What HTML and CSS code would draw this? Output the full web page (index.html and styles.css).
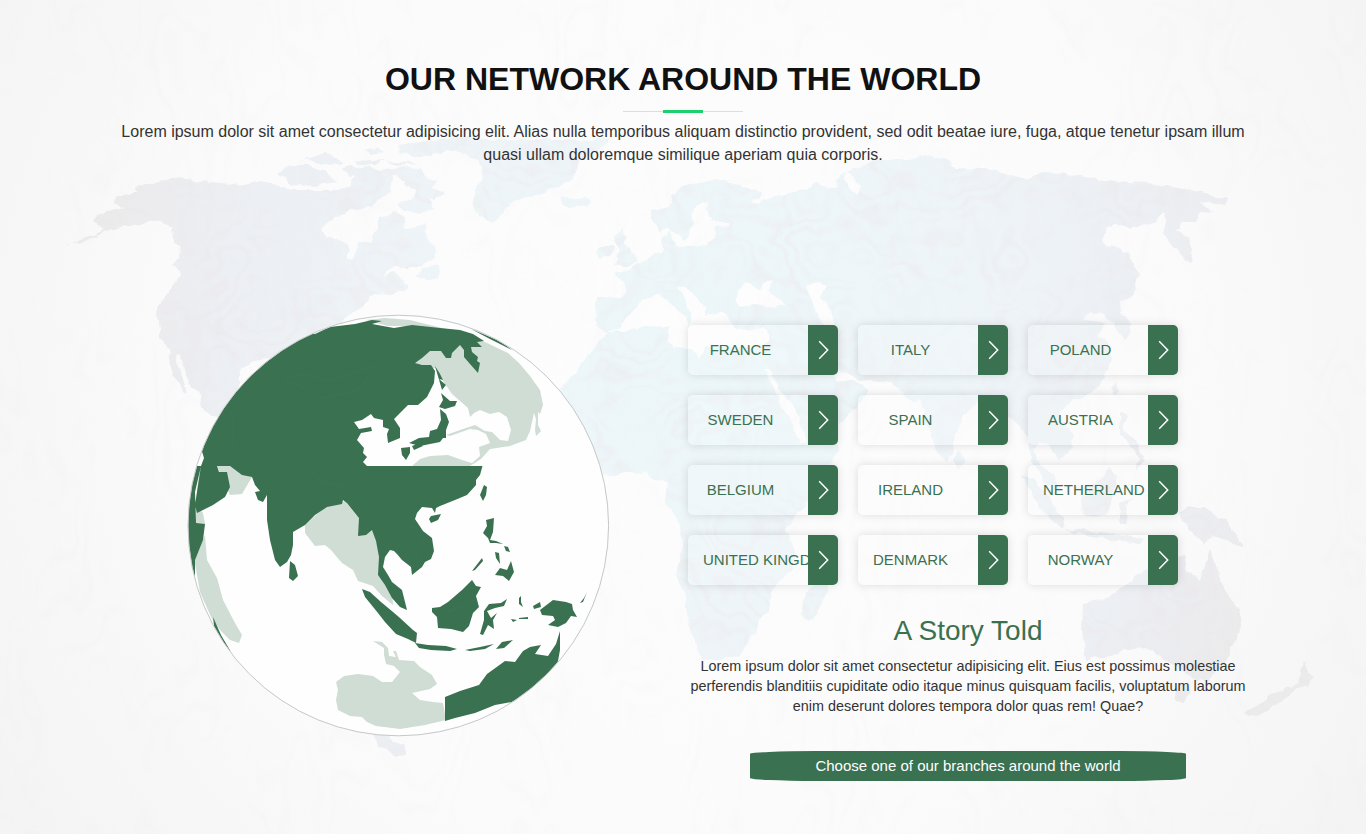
FILE: index.html
```html
<!DOCTYPE html>
<html lang="en">
<head>
<meta charset="utf-8">
<title>Our Network Around The World</title>
<link rel="stylesheet" href="styles.css">
</head>
<body>
<section class="network">
  <svg class="backdrop" viewBox="0 0 1366 834" aria-hidden="true">
    <defs>
      <symbol id="chevron" viewBox="0 0 30 50"><path d="M11.200 16.300 19.700 25 11.200 33.700" fill="none" stroke="#fff" stroke-width="1.500"/></symbol>
      <radialGradient id="paper" gradientUnits="userSpaceOnUse" cx="683" cy="370" r="800">
        <stop offset="0" stop-color="#fdfdfd"/><stop offset=".6" stop-color="#fbfbfb"/><stop offset="1" stop-color="#f4f4f4"/>
      </radialGradient>
      <radialGradient id="landfill" gradientUnits="userSpaceOnUse" cx="700" cy="360" r="610">
        <stop offset="0" stop-color="#ecf7f9"/><stop offset=".45" stop-color="#eef5f8"/><stop offset=".78" stop-color="#eceff3"/><stop offset=".93" stop-color="#ececef"/><stop offset="1" stop-color="#ebebeb"/>
      </radialGradient>
      <filter id="coast" x="0" y="0" width="100%" height="100%">
        <feTurbulence type="fractalNoise" baseFrequency=".09" numOctaves="2" seed="4"/>
        <feDisplacementMap in="SourceGraphic" scale="7" xChannelSelector="R" yChannelSelector="G"/>
      </filter>
      <filter id="crease" x="0" y="0" width="100%" height="100%">
        <feTurbulence type="fractalNoise" baseFrequency=".012 .014" numOctaves="3" seed="8" result="noise"/>
        <feColorMatrix in="noise" values="0 0 0 0 .84  0 0 0 0 .76  0 0 0 0 .8  1 0 0 0 0"/>
        <feComponentTransfer result="lines"><feFuncA type="table" tableValues="0 0 0 0 0 0 0 .25 0 0 .28 0 0 .28 0 0 .25 0 0 0 0 0 0"/></feComponentTransfer>
        <feColorMatrix in="noise" values="0 0 0 0 0  0 0 0 0 0  0 0 0 0 0  0 4 0 0 -1.4"/>
        <feComposite in="lines" operator="in"/>
        <feComposite in2="SourceAlpha" operator="in"/>
      </filter>
      <filter id="grain" x="0" y="0" width="100%" height="100%">
        <feTurbulence type="fractalNoise" baseFrequency=".012 .006" numOctaves="3" seed="21" result="noise"/>
        <feColorMatrix in="noise" values="0 0 0 0 .7  0 0 0 0 .7  0 0 0 0 .7  1 0 0 0 0"/>
        <feComponentTransfer result="lines"><feFuncA type="table" tableValues="0 0 0 0 0 0 0 .05 0 0 .06 0 0 .06 0 0 .05 0 0 0 0 0 0"/></feComponentTransfer>
        <feColorMatrix in="noise" values="0 0 0 0 0  0 0 0 0 0  0 0 0 0 0  0 5 0 0 -2"/>
        <feComposite in="lines" operator="in"/>
      </filter>
      <g id="land">
        <path d="M60 247 75 243 105 230 97 226 93 222 98 215 104 212 125 207 114 203 117 198 137 193 136 188 155 182 180 177 200 182 222 184 240 186 262 181 275 184 290 190 338 190 350 186 355 175 352 169 367 166 380 171 400 167 420 168 429 179 436 180 432 188 446 194 435 200 428 198 435 208 425 212 415 213 400 208 398 202 412 200 415 192 405 183 395 174 390 182 392 192 380 198 372 206 352 210 335 216 322 229 325 236 345 242 350 250 347 258 353 260 358 244 372 240 380 218 395 212 404 218 405 229 413 228 424 223 425 238 434 246 436 258 420 267 395 267 383 276 396 273 405 282 410 285 392 296 384 292 370 295 365 305 345 318 335 330 300 350 255 361 241 370 238 386 230 420 215 417 202 408 200 396 190 385 184 370 181 354 176 355 178 367 183 380 186 389 184 393 177 382 171 368 169 349 160 338 157 312 163 300 175 285 180 273 174 264 179 258 180 246 174 244 173 227 153 220 140 225 125 227 105 232 85 242Z"/>
        <path d="M277 174 290 165 308 165 327 172 335 183 318 186 292 185 284 177ZM305 159 325 153 345 162 330 166ZM341 169 350 166 366 171 352 176ZM355 160 372 161 385 160 375 165 357 165ZM365 151 378 148 382 153 372 155ZM387 161 410 163 418 163 400 166ZM397 145 450 138 480 134 458 150 420 157 400 154ZM414 276 423 268 438 264 439 279 430 281ZM560 198 567 197 574 199 586 198 592 200 587 205 574 208 564 204ZM597 251 605 245 613 245 611 255 599 260ZM613 235 620 231 625 226 623 235 627 239 623 244 630 249 636 256 638 261 629 266 613 266 620 260 616 256 620 250 615 244Z"/>
        <path d="M450 148 470 140 540 139 610 140 593 153 580 160 573 180 543 193 513 200 502 214 493 222 478 218 473 203 475 189 483 178 480 160Z"/>
        <path d="M597 296 622 297 626 290 624 282 614 275 625 271 640 262 655 253 663 250 662 236 672 231 677 247 690 247 705 245 716 237 715 228 728 224 728 222 712 222 708 215 705 207 708 200 716 199 708 200 701 204 692 215 694 223 688 236 684 240 678 234 670 228 660 231 652 222 652 210 668 206 672 197 680 188 700 182 715 179 730 182 763 193 762 198 750 200 758 203 775 196 790 193 810 188 815 183 830 188 838 187 836 180 842 172 855 168 880 160 913 160 918 155 950 160 952 168 985 169 1005 173 1025 179 1042 173 1070 174 1105 181 1148 183 1190 190 1227 199 1225 205 1200 201 1213 213 1200 212 1195 222 1180 222 1176 230 1190 237 1192 250 1190 262 1175 248 1163 235 1166 220 1162 213 1155 223 1138 227 1115 226 1106 230 1102 243 1115 248 1130 255 1138 273 1135 293 1120 302 1121 313 1132 325 1131 335 1123 340 1113 323 1103 315 1091 311 1082 320 1095 321 1105 323 1098 335 1110 345 1111 360 1105 378 1090 393 1075 400 1068 407 1058 410 1065 425 1074 435 1072 448 1060 460 1050 447 1039 440 1034 450 1040 465 1054 475 1060 490 1045 483 1031 460 1029 435 1015 425 1005 410 990 395 978 402 962 417 955 435 953 455 945 462 935 445 925 420 921 400 912 403 905 395 892 383 860 380 840 370 829 362 838 382 858 382 868 390 858 405 845 420 810 443 836 442 838 450 824 480 805 505 786 528 793 550 793 570 770 590 770 612 758 620 755 635 740 655 722 660 702 661 697 645 688 620 684 590 676 575 682 545 680 525 665 500 667 483 650 480 644 472 627 471 612 476 600 475 575 455 560 440 560 390 568 380 592 350 606 332 597 325 595 315Z"/>
        <path d="M830 572 825 595 815 618 808 621 802 612 808 590ZM1115 382 1118 391 1114 397 1111 389ZM958 448 966 460 958 472 954 460ZM1119 412 1127 415 1124 430 1135 440 1145 460 1134 472 1140 458 1131 446 1120 436ZM1020 475 1032 478 1050 500 1064 520 1062 528 1045 515ZM1080 500 1110 467 1118 476 1108 515 1085 516ZM1120 505 1135 497 1126 507 1134 525 1128 512 1125 525 1120 525ZM1064 528 1100 532 1145 539 1140 544 1085 536ZM1178 511 1190 507 1204 507 1224 519 1234 531 1244 548 1226 541 1214 534 1204 543 1190 530ZM1083 603 1107 598 1122 587 1145 570 1172 556 1186 557 1184 570 1200 580 1210 550 1219 576 1230 597 1238 610 1241 622 1235 640 1222 668 1206 681 1188 675 1180 668 1162 659 1147 647 1134 648 1115 655 1086 660 1082 630ZM1178 684 1188 686 1190 694 1183 703 1175 702ZM1304 661 1308 673 1315 676 1306 688 1297 687 1285 697 1270 710 1250 718 1244 714 1266 700 1285 688 1298 683ZM360 720 402 745 406 754 397 757 378 745Z"/>
      </g>
    </defs>
    <rect width="1366" height="834" fill="url(#paper)"/>
    <g filter="url(#coast)">
      <use href="#land" fill="url(#landfill)"/>
      <use href="#land" filter="url(#crease)"/>
      <g fill="#fdfdfd">
        <path d="M605 332 619 330 626 318 634 310 642 300 660 293 670 304 682 314 690 325 690 312 677 287 684 287 705 306 703 316 720 312 730 318 735 330 768 329 768 342 755 348 738 346 708 347 700 357 690 350 672 347 667 338 671 327 645 326 625 332Z"/>
        <path d="M738 292 746 282 753 286 760 290 763 283 772 281 768 290 787 305 775 308 755 304 738 306ZM806 286 820 281 825 285 820 298 830 308 835 325 823 324 815 312 812 300ZM763 370 768 370 780 390 793 405 807 442 800 443 785 410Z"/>
        <path d="M848 170 854 178 861 186 858 196 848 185 843 179Z"/>
      </g>
    </g>
    <rect width="1366" height="834" filter="url(#grain)"/>
  </svg>

  <header class="intro">
    <h1 class="intro-title">OUR NETWORK AROUND THE WORLD</h1>
    <div class="divider"></div>
    <p class="intro-text">Lorem ipsum dolor sit amet consectetur adipisicing elit. Alias nulla temporibus aliquam distinctio provident, sed odit beatae iure, fuga, atque tenetur ipsam illum quasi ullam doloremque similique aperiam quia corporis.</p>
  </header>

  <div class="columns">
    <svg class="globe" viewBox="187 314 423 423" role="img" aria-label="Globe">
      <defs><clipPath id="disc"><circle cx="398.3" cy="525.5" r="210"/></clipPath></defs>
      <circle cx="398.3" cy="525.5" r="210.2" fill="#fefefe"/>
      <g clip-path="url(#disc)">
        <g class="far">
          <path d="M366 320 385 318 410 320 430 325 462 333 485 342 508 353 519 363 530 376 540 390 543 405 540 414 538 412 538 425 541 431 536 436 535 430 536 419 534 413 530 431 526 440 510 446 490 449 481 459 470 466 412 466 420 459 430 456 448 455 462 460 472 463 480 456 479 447 490 443 486 434 478 430 470 429 450 436 446 435 460 430 475 425 485 431 492 432 500 440 508 441 511 430 507 417 499 412 490 414 480 410 474 413 470 417 468 408 452 394 443 381 435 368 422 368 414 362 428 351 445 346 470 340 440 329 400 326 388 326Z"/>
          <path d="M217 466h13l12 8 10 3-10 17-12 1ZM200 466h3l-2 30-2 12 4 5 2 11h-10V507ZM305 525 325 507 341 503 350 498 360 510 373 530 380 555 382 570 392 590 393 605 382 596 373 586 358 581 353 570 342 563 331 550 325 545 315 546 305 533ZM205 535 207 560 217 578 223 600 235 623 242 635 239 643 230 640 220 630 211 617 200 592 194 558Z"/>
          <path d="M336 700 338 690 336 682 344 676 358 674 373 676 382 682 392 682 400 672 394 666 386 664 384 655 384 648 373 641 382 642 388 648 389 656 396 657 393 651 396 651 399 660 414 661 420 667 432 675 437 684 430 689 412 693 420 700 433 702 443 703 446 720 425 725 400 729 376 726 367 722 362 717 350 716 338 710Z"/>
        </g>
        <g class="near">
          <path d="M201 466 204 458 200 445 200 380 260 320 315 334 330 327 355 324 372 320 382 321 372 324 394 328 412 325 440 328 460 330 473 334 484 341 477 342 482 347 471 347 472 352 478 357 477 361 480 363 478 373 470 364 464 357 464 350 460 345 452 353 451 358 446 358 441 351 430 351 422 358 415 363 422 365 431 365 435 371 434 383 427 397 418 405 408 405 400 413 394 419 400 428 400 438 388 443 387 434 389 429 383 427 383 420 374 418 371 414 362 420 354 422 359 429 371 427 372 431 361 433 357 440 364 448 363 453 367 457 363 462 367 466H482.500L480 475 476 480 476 485 467 495 455 500 440 506 436 508 435 513 432 508 422 507 417 513 415 519 423 531 432 538 434 551 431 559 425 562 422 567 412 575 411 567 402 560 397 554 394 551 390 550 385 557 383 567 388 575 392 582 402 590 407 610 400 607 392 598 385 585 378 575 379 557 376 541 372 530 366 535 358 536 359 518 347 503 343 500 342 504 327 507 315 515 305 525 293 532 293 545 291 555 287 562 280 567 275 560 270 540 267 520 267 495 263 502 258 500 255 492 260 491 255 485 252 477 242 475 230 466H217L219 472 227 472 230 487 225 497 213 505 197 513 195 505 201 466 195 492 196 523 205 524 203 540 195 560 195 580H188V466Z"/>
          <path d="M213 617 221 635 231 652 215 634ZM471 329 500 341 512 350 490 339ZM290 561 295 565 298 576 293 581 289 578ZM435 366 440 374 443 380 439 379 446 385 442 390ZM441 393 450 401 457 401 455 406 445 409 439 407 443 400ZM440 409 446 414 449 422 446 430 446 438 443 438 440 442 430 444 420 446 409 443 419 438 429 437 430 431 437 429 441 420ZM401 448 410 447 410 453 406 460 402 455ZM412 446 420 443 423 446 414 450ZM484 485 487 487 486 495 483 501 480 495ZM431 516 441 514 438 520 431 523 429 519ZM486 520 494 518 493 532 490 540 496 541 503 544 496 543 490 543 488 538 483 533 487 526ZM495 552 499 553 500 564 496 558ZM504 546 508 547 510 552 506 551ZM495 575 500 568 507 570 511 561 514 572 509 581 503 576ZM472 571 482 558 483 561 475 570ZM432 608 440 607 448 602 462 590 472 580 476 586 481 587 476 596 479 607 473 613 469 626 463 632 451 629 438 628 437 617 432 612ZM362 589 370 592 381 602 393 612 400 618 413 630 417 633 416 643 408 639 396 634 385 622 378 613 365 597ZM415 643 428 645 446 646 457 649 450 651 431 650 419 648ZM484 611 489 604 501 603 507 599 504 606 495 608 487 611 491 618 497 613 493 620 494 629 488 625 483 635 480 634 484 620ZM465 650 480 647 494 644 485 649 470 651ZM496 649 502 642 513 640 504 648ZM511 619 517 620 513 622ZM519 618 528 617 528 619 519 619ZM519 598 521 596 521 602 523 607 519 604ZM533 606 540 602 541 607 534 609ZM540 610 553 600 566 602 572 604 573 610 577 617 571 616 566 623 558 627 548 625 555 620 553 616 542 615ZM580 603 584 598 587 592 583 602ZM445 697 460 691 479 685 487 674 505 661 515 662 523 651 530 647 541 645 535 654 548 656 556 644 560 631 560 650 558 661 545 690 512 702 495 705 475 713 455 718 445 721Z"/>
        </g>
        <g class="borders">
          <path d="M284 382q20 2 26 11t22 3l26-6 12-15M285 378l22-4 20 7 31-10 17-5M305 467l16 14 22 6 16-14M231 410q4 25 2 41M410 524l14 16-7 20M447 612l18-6 10-7M337 486l5 15"/>
        </g>
      </g>
      <circle class="rim" cx="398.3" cy="525.5" r="210.300"/>
    </svg>

    <div class="branches">
      <ul class="country-grid">
        <li class="country"><span class="country-name">FRANCE</span><svg class="arrow"><use href="#chevron"/></svg></li>
        <li class="country"><span class="country-name">ITALY</span><svg class="arrow"><use href="#chevron"/></svg></li>
        <li class="country"><span class="country-name">POLAND</span><svg class="arrow"><use href="#chevron"/></svg></li>
        <li class="country"><span class="country-name">SWEDEN</span><svg class="arrow"><use href="#chevron"/></svg></li>
        <li class="country"><span class="country-name">SPAIN</span><svg class="arrow"><use href="#chevron"/></svg></li>
        <li class="country"><span class="country-name">AUSTRIA</span><svg class="arrow"><use href="#chevron"/></svg></li>
        <li class="country"><span class="country-name">BELGIUM</span><svg class="arrow"><use href="#chevron"/></svg></li>
        <li class="country"><span class="country-name">IRELAND</span><svg class="arrow"><use href="#chevron"/></svg></li>
        <li class="country"><span class="country-name">NETHERLAND</span><svg class="arrow"><use href="#chevron"/></svg></li>
        <li class="country"><span class="country-name">UNITED KINGD</span><svg class="arrow"><use href="#chevron"/></svg></li>
        <li class="country"><span class="country-name">DENMARK</span><svg class="arrow"><use href="#chevron"/></svg></li>
        <li class="country"><span class="country-name">NORWAY</span><svg class="arrow"><use href="#chevron"/></svg></li>
      </ul>
      <div class="story">
        <h2 class="story-title">A Story Told</h2>
        <p class="story-text">Lorem ipsum dolor sit amet consectetur adipisicing elit. Eius est possimus molestiae perferendis blanditiis cupiditate odio itaque minus quisquam facilis, voluptatum laborum enim deserunt dolores tempora dolor quas rem! Quae?</p>
        <div class="cta">Choose one of our branches around the world</div>
      </div>
    </div>
  </div>
</section>
</body>
</html>
```
FILE: styles.css
```css
* { box-sizing: border-box; }
body {
  margin: 0;
  font-family: "Liberation Sans", Arial, sans-serif;
  color: #333;
  background: #fbfbfb;
}
.network {
  position: relative;
  height: 834px;
  overflow: hidden;
}
.backdrop {
  position: absolute;
  inset: 0;
  width: 1366px;
  height: 834px;
}
.intro {
  position: relative;
  width: 1140px;
  margin: 0 auto;
  padding-top: 60px;
  text-align: center;
}
.intro-title {
  margin: 0;
  color: #111;
  font-size: 32px;
  line-height: 38px;
  font-weight: 700;
}
.divider {
  width: 120px;
  height: 3px;
  margin: 12px auto 7px;
  background:
    linear-gradient(#1cd070, #1cd070) center / 40px 3px no-repeat,
    linear-gradient(#ddd, #ddd) center / 120px 1px no-repeat;
}
.intro-text {
  margin: 0;
  font-size: 16px;
  line-height: 23px;
}
.columns {
  position: relative;
  display: flex;
  align-items: flex-start;
  padding-left: 187px;
}
.globe {
  flex: none;
  width: 423px;
  height: 423px;
  margin-top: 148px;
}
.far { fill: #cfddd5; }
.near { fill: #3a7151; }
.borders { fill: none; stroke: #3f7656; stroke-width: .8; }
.rim { fill: none; stroke: #c4c8c6; stroke-width: 1; }
.branches {
  width: 560px;
  margin: 159px 0 0 78px;
}
.country-grid {
  display: grid;
  grid-template-columns: repeat(3, 150px);
  grid-auto-rows: 50px;
  gap: 20px;
  margin: 0;
  padding: 0;
  list-style: none;
}
.country {
  display: flex;
  overflow: hidden;
  border-radius: 5px;
  background: rgba(255, 255, 255, .15);
  box-shadow: 0 0 10px rgba(0, 0, 0, .13);
  color: #3a7151;
  font-size: 15px;
  line-height: 50px;
}
.country-name {
  flex: none;
  width: 120px;
  padding: 0 30px 0 15px;
  text-align: center;
  white-space: nowrap;
}
.arrow {
  position: relative;
  flex: none;
  width: 30px;
  height: 50px;
  background: #3a7151;
}
.story { text-align: center; }
.story-title {
  margin: 30px 0 0;
  color: #3a7151;
  font-size: 28px;
  font-weight: 400;
  line-height: 32px;
}
.story-text {
  margin: 9px 0 0;
  font-size: 14.4px;
  line-height: 20px;
}
.cta {
  width: 436px;
  height: 30px;
  margin: 35px auto 0;
  border-radius: 15% / 10%;
  background: #3a7151;
  color: #fff;
  font-size: 15px;
  line-height: 30px;
}
```
